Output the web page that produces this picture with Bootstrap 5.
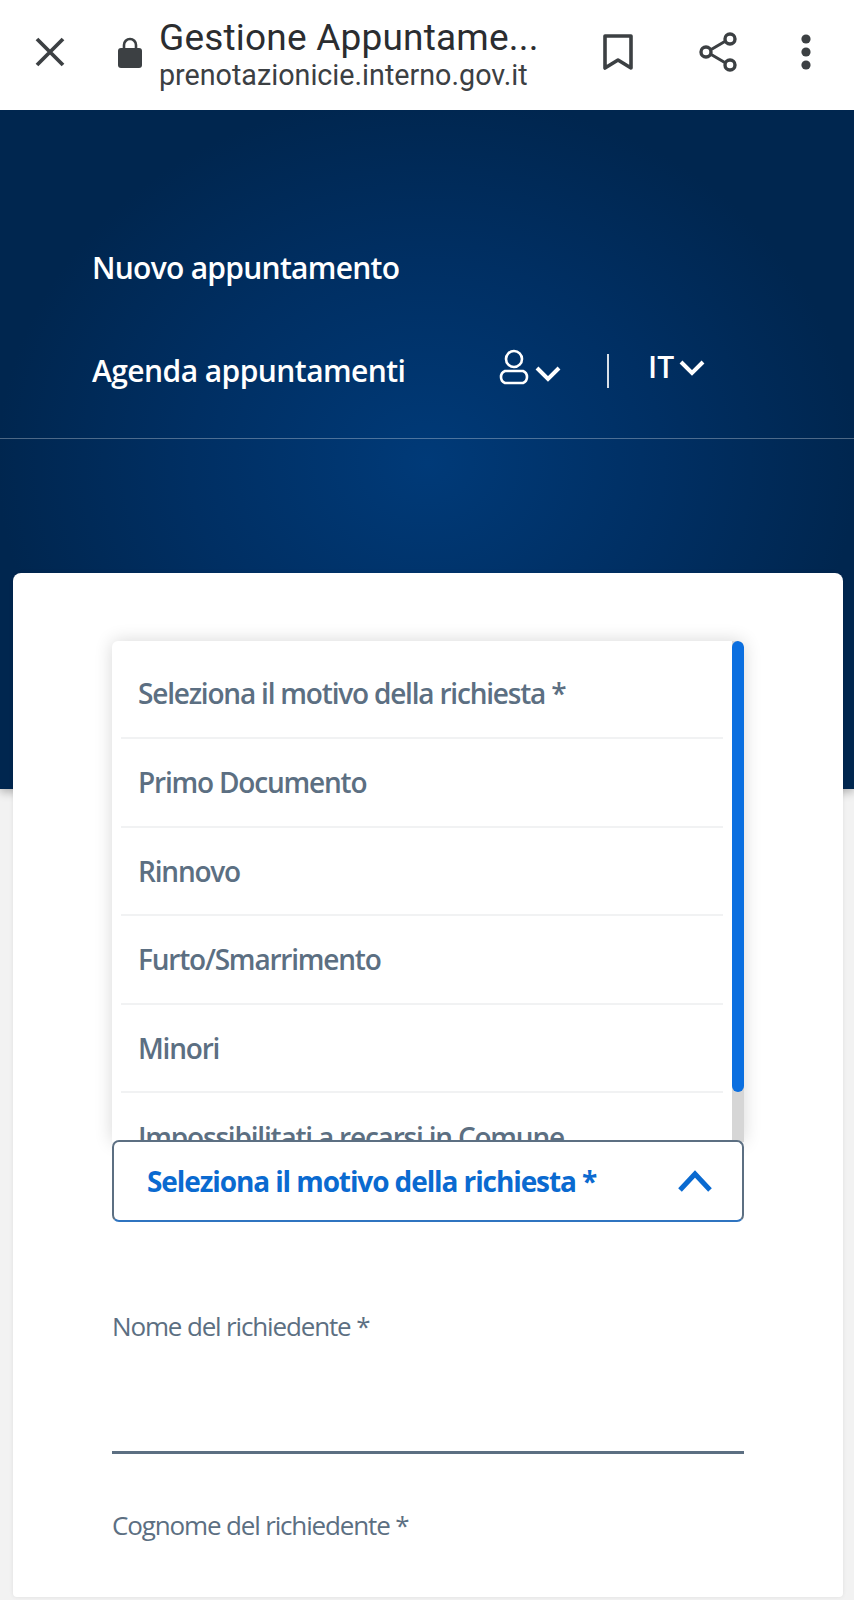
<!DOCTYPE html>
<html lang="it">
<head>
<meta charset="utf-8">
<title>Gestione Appuntamenti</title>
<link href="https://cdn.jsdelivr.net/npm/bootstrap@5.3.0/dist/css/bootstrap.min.css" rel="stylesheet">
<style>
html,body{height:1600px;overflow:hidden}
body{background:#f2f2f2;font-family:"Open Sans",sans-serif;color:#5c6f82}
.topbar{height:110px;background:#fff;padding:0;flex-wrap:nowrap;color:#3c4043}
.tb-close{width:34px;margin-left:33px;margin-top:-6px}
.tb-lock{margin-left:50px;width:26px;margin-top:-6px}
.tb-titles{margin-left:16px;width:395px;font-family:Roboto,sans-serif;line-height:1}
.tb-title{font-size:37px;color:#2b2d30;line-height:42px;height:40px;white-space:nowrap;letter-spacing:.2px}
.tb-url{font-size:28.7px;color:#3c4043;line-height:36px;white-space:nowrap}
.tb-book{margin-left:48px;width:32px;margin-top:-6px}
.tb-share{margin-left:64px;width:40px;margin-top:-6px}
.tb-more{margin-left:62px;width:12px;margin-top:-6px}
.hero{height:679px;background:radial-gradient(ellipse 430px 370px at 50% 52%,#003a78 0%,#002f63 55%,#00264f 100%);box-shadow:0 3px 9px rgba(0,0,0,.28);color:#fff}
.hero-nav{padding:136px 0 0 92px;font-size:30px;font-weight:600;height:329px;border-bottom:1px solid rgba(255,255,255,.3);letter-spacing:-.6px}
.hero-link{color:#fff;text-decoration:none;display:block;line-height:44px}
.hero-link:first-child{letter-spacing:-.72px}
.hero-row{margin-top:59px;height:44px}
.hero-row .hero-link{width:405px;letter-spacing:-.56px}
.h-user{width:34px;margin-top:0}
.h-chev{width:28px;margin-left:3px;margin-top:16px}
.h-sep{width:2px;height:34px;background:rgba(255,255,255,.85);margin-left:45px;margin-top:5px}
.h-it{margin-left:39px;letter-spacing:0;line-height:36px;font-size:30px;margin-top:0}
.h-chev2{width:28px;margin-left:4px;margin-top:10px}
.sheet{margin:-216px 11px 0 13px;height:1024px;background:#fff;border:0;border-radius:8px 8px 4px 4px;padding:68px 99px 0;box-shadow:0 0 4px rgba(0,0,0,.08)}
.menu-box{height:501px;overflow:hidden;border-radius:6px 6px 0 0;box-shadow:0 0 18px rgba(0,0,0,.16)}
.menu-list{padding:0 21px 0 9px;width:100%}
.menu-row{height:88.6px;padding:0 0 0 17px;background:transparent;border:0;border-bottom:2px solid #f1f2f3;color:#5c6f82;font-size:28px;font-weight:600;display:flex;align-items:center;letter-spacing:-1.2px;border-radius:0!important;white-space:nowrap}
.menu-row:first-child{height:98px;padding-top:8px}
.track{width:12px;top:0;right:0;bottom:0;background:#d6d6d6}
.thumb{height:451px;background:#0b6fe0;border-radius:6px}
.sel-btn{height:82px;margin-top:-2px;width:100%;padding:0 29px 0 33px;border:2px solid #5c6f82;border-bottom-color:#2f74c0;border-radius:7px;background:#fff;color:#0a6ad0;font-size:28px;font-weight:700;letter-spacing:-1.1px;position:relative}
.field{display:block;font-size:26px;font-weight:500;letter-spacing:-1.15px;color:#5c6f82;line-height:36px}
.f1{margin-top:86px}
.rule{height:3px;background:#5c6f82;margin-top:107px}
.f2{margin-top:53px}
</style>
</head>
<body>
<nav class="navbar topbar d-flex justify-content-start align-items-center">
  <svg class="tb-close" viewBox="0 0 34 34" height="34"><path d="M4 4L30 30M30 4L4 30" stroke="#3c4043" stroke-width="3.8" fill="none"/></svg>
  <svg class="tb-lock" viewBox="0 0 26 32" height="32"><path d="M7 13V9a6 6 0 0 1 12 0v4" stroke="#3c4043" stroke-width="2.6" fill="none"/><rect x="1" y="12" width="24" height="20" rx="3" fill="#3c4043"/></svg>
  <div class="tb-titles">
    <div class="tb-title">Gestione Appuntame...</div>
    <div class="tb-url">prenotazionicie.interno.gov.it</div>
  </div>
  <svg class="tb-book" viewBox="0 0 32 38" height="38"><path d="M3 3H29V35L16 27L3 35Z" stroke="#3c4043" stroke-width="3.6" fill="none" stroke-linejoin="round"/></svg>
  <svg class="tb-share" viewBox="0 0 40 42" height="42"><path d="M31 8L9 21L31 34" stroke="#3c4043" stroke-width="3" fill="none"/><circle cx="32" cy="8" r="5" fill="#fff" stroke="#3c4043" stroke-width="3.4"/><circle cx="8" cy="21" r="5" fill="#fff" stroke="#3c4043" stroke-width="3.4"/><circle cx="32" cy="34" r="5" fill="#fff" stroke="#3c4043" stroke-width="3.4"/></svg>
  <svg class="tb-more" viewBox="0 0 12 36" height="36"><circle cx="6" cy="5" r="4.6" fill="#3c4043"/><circle cx="6" cy="18" r="4.6" fill="#3c4043"/><circle cx="6" cy="31" r="4.6" fill="#3c4043"/></svg>
</nav>
<header class="hero">
  <div class="hero-nav">
    <a class="hero-link" href="#">Nuovo appuntamento</a>
    <div class="hero-row d-flex align-items-start">
      <a class="hero-link" href="#">Agenda appuntamenti</a>
      <svg class="h-user" viewBox="0 0 34 36" height="36"><circle cx="17" cy="10" r="8" fill="none" stroke="#fff" stroke-width="2.6"/><path d="M8 22H26A6.5 6.5 0 0 1 26 34H8A6.5 6.5 0 0 1 8 22Z" fill="none" stroke="#fff" stroke-width="2.6"/></svg>
      <svg class="h-chev" viewBox="0 0 28 18" height="18"><path d="M3 3L14 14L25 3" stroke="#fff" stroke-width="4" fill="none"/></svg>
      <span class="h-sep"></span>
      <span class="h-it">IT</span>
      <svg class="h-chev2" viewBox="0 0 28 18" height="18"><path d="M3 3L14 14L25 3" stroke="#fff" stroke-width="4" fill="none"/></svg>
    </div>
  </div>
</header>
<main class="card sheet">
  <div class="menu-box position-relative">
    <div class="list-group menu-list">
      <a class="list-group-item menu-row" href="#">Seleziona il motivo della richiesta *</a>
      <a class="list-group-item menu-row" href="#">Primo Documento</a>
      <a class="list-group-item menu-row" href="#">Rinnovo</a>
      <a class="list-group-item menu-row" href="#">Furto/Smarrimento</a>
      <a class="list-group-item menu-row" href="#">Minori</a>
      <a class="list-group-item menu-row" href="#">Impossibilitati a recarsi in Comune</a>
    </div>
    <div class="track position-absolute"><div class="thumb"></div></div>
  </div>
  <button class="sel-btn d-flex justify-content-between align-items-center" type="button">
    <span>Seleziona il motivo della richiesta *</span>
    <svg viewBox="0 0 36 24" width="36" height="24"><path d="M3 21L18 5L33 21" stroke="#0a6ad0" stroke-width="5" fill="none"/></svg>
  </button>
  <label class="field f1">Nome del richiedente *</label>
  <div class="rule"></div>
  <label class="field f2">Cognome del richiedente *</label>
</main>
</body>
</html>
